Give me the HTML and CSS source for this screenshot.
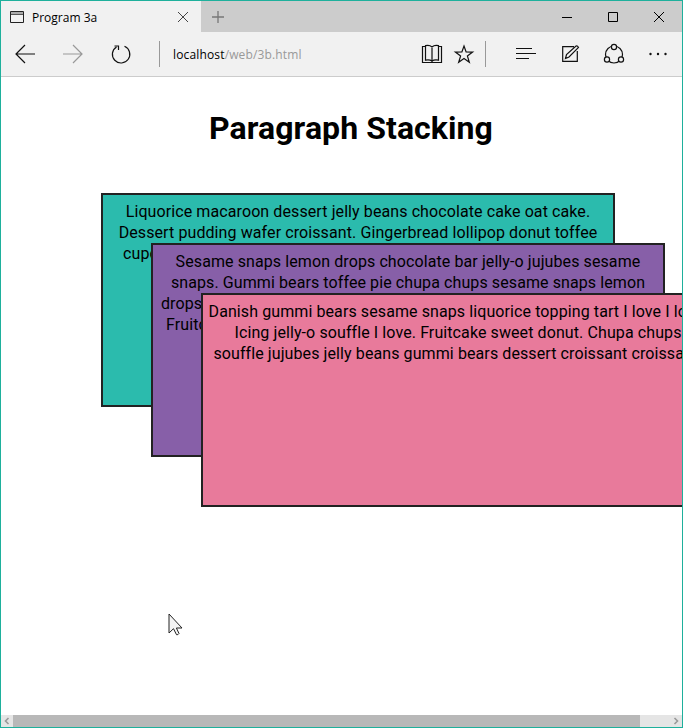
FILE: index.html
```html
<!DOCTYPE html>
<html lang="en">
<head>
<meta charset="utf-8">
<title>Program 3a</title>
<link rel="stylesheet" href="styles.css">
</head>
<body>
<div class="window">
  <header class="titlebar">
    <div class="tab">
      <svg class="tab-icon" width="14" height="12" viewBox="0 0 14 12"><path d="M.5 .5h13v11H.5z" fill="none" stroke="#222"/><path d="M1 2h12" stroke="#aaa" stroke-width="2"/><path d="M1 3.500h12" stroke="#555"/></svg>
      <span class="tab-title">Program 3a</span>
      <svg class="tab-close" width="12" height="12" viewBox="0 0 12 12"><path d="M1 1l10 10M11 1L1 11" stroke="#444"/></svg>
    </div>
    <svg class="new-tab" width="12" height="12" viewBox="0 0 12 12"><path d="M6 0v12M0 6h12" stroke="#777" stroke-width="1.3"/></svg>
    <svg class="controls" width="104" height="12" viewBox="0 0 104 12" fill="none" stroke="#000"><path d="M1 6.5h10M47.500 1.500h9v9h-9zM93 1l10 10M103 1L93 11"/></svg>
  </header>
  <nav class="toolbar">
    <svg width="682" height="44" viewBox="1 32 682 44" fill="none" stroke="#111" stroke-width="1.2">
      <path d="M35 54H16M25 45l-9 9 9 9"/>
      <path d="M63 54h19M73 45l9 9-9 9" stroke="#999"/>
      <path d="M124.500 46.300A8.700 8.700 0 1 1 116.500 46.900M114.500 46h4v4"/>
      <path d="M159.500 41v26M485.500 41v26" stroke="#999" stroke-width="1"/>
      <path d="M425 46.500h-2.500v16h19v-16H439M432 48v14.500M425.500 45.700q4-1 6.500 1.300 2.500-2.300 6.500-1.300v14.500q-4-.8-6.500 .8-2.500-1.600-6.500-.8z"/>
      <path d="M464 46l2.100 6 6.500.1-5.200 3.900 1.900 6.300-5.300-3.800-5.300 3.800 1.900-6.300-5.200-3.900 6.500-.1z"/>
      <path d="M516 48.500h16M516 53.500h20M516 58.500h13" stroke-width="1"/>
      <path d="M574 46.700h-11.300v14.600h14.600V51M565.500 58.500l1-4 9.500-8.500q1.500-.5 2.500 1.500l-9.500 9.500z"/>
      <circle cx="614" cy="54.500" r="8.500"/>
      <g fill="#f1f1f1"><circle cx="614" cy="47" r="2.600"/><circle cx="607" cy="59.500" r="2.600"/><circle cx="621" cy="59.500" r="2.600"/></g>
      <g fill="#111" stroke="none"><circle cx="650.500" cy="54" r="1.200"/><circle cx="658" cy="54" r="1.200"/><circle cx="665.500" cy="54" r="1.200"/></g>
    </svg>
    <div class="address">localhost<span>/web/3b.html</span></div>
  </nav>
  <main class="page">
    <h1>Paragraph Stacking</h1>
    <div class="box teal">
      <p>Liquorice macaroon dessert jelly beans chocolate cake oat cake.</p>
      <p>Dessert pudding wafer croissant. Gingerbread lollipop donut toffee</p>
      <p class="lead-a">cupcake</p>
    </div>
    <div class="box purple">
      <p>Sesame snaps lemon drops chocolate bar jelly-o jujubes sesame</p>
      <p>snaps. Gummi bears toffee pie chupa chups sesame snaps lemon</p>
      <p class="lead-b">drops.</p>
      <p class="lead-c">Fruitcake</p>
    </div>
    <div class="box pink">
      <p>Danish gummi bears sesame snaps liquorice topping tart I love I love.</p>
      <p>Icing jelly-o souffle I love. Fruitcake sweet donut. Chupa chups</p>
      <p>souffle jujubes jelly beans gummi bears dessert croissant croissant.</p>
    </div>
    <svg class="cursor" width="16" height="24" viewBox="0 0 16 24"><path d="M1 1v19l4.500-4.300 3 6q1.500.5 2.500-1.200l-2.600-5.500H14z" fill="#f4f4f4" stroke="#222"/></svg>
  </main>
  <footer class="scrollbar">
    <svg width="12" height="12" viewBox="0 0 12 12"><path d="M7.500 3L4.500 6l3 3" fill="none" stroke="#999" stroke-width="1.600"/></svg>
    <div class="thumb"></div>
    <svg class="right" width="12" height="12" viewBox="0 0 12 12"><path d="M4.500 3l3 3-3 3" fill="none" stroke="#999" stroke-width="1.600"/></svg>
  </footer>
</div>
</body>
</html>
```
FILE: styles.css
```css
* { box-sizing: border-box; }
body { margin: 0; background: #fff; overflow: hidden; }
svg { display: block; flex: none; }
.window {
  width: 683px;
  height: 728px;
  border: 1px solid #1eb09c;
  display: flex;
  flex-direction: column;
  overflow: hidden;
}
.titlebar {
  height: 31px;
  flex: none;
  background: #ccc;
  display: flex;
  align-items: center;
  font: 13px "Open Sans", sans-serif;
}
.tab {
  width: 200px;
  height: 31px;
  background: #f1f1f1;
  display: flex;
  align-items: center;
  padding: 0 12px 0 9px;
}
.tab-icon { margin-right: 8px; }
.tab-title { font-size: 12px; padding-top: 2px; }
.tab-close { margin-left: auto; }
.new-tab { margin-left: 11px; }
.controls { margin: 0 17px 0 auto; }
.toolbar {
  height: 45px;
  flex: none;
  position: relative;
  background: #f1f1f1;
  border-bottom: 1px solid #ccc;
}
.address {
  position: absolute;
  left: 172px;
  top: 14px;
  font: 12px/18px "Open Sans", sans-serif;
  letter-spacing: 0.15px;
  color: #000;
}
.address span { color: #999; }
.page {
  position: relative;
  flex: 1;
  overflow: hidden;
  background: #fff;
  font: 16px/21px Roboto, sans-serif;
  color: #000;
}
h1 {
  margin: 30px 0 0;
  width: 700px;
  text-align: center;
  font-size: 32px;
  line-height: 42px;
  font-weight: 700;
  letter-spacing: 0.08px;
}
.box {
  position: absolute;
  width: 514px;
  height: 214px;
  padding: 6px 5px 4px;
  border: 2px solid #222;
  text-align: center;
  white-space: nowrap;
  letter-spacing: 0.095px;
}
.box p { margin: 0; }
.teal { left: 100px; top: 116px; background: #2bbbad; }
.purple { left: 150px; top: 166px; background: #875fa8; }
.pink { left: 200px; top: 216px; background: #e87a9b; }
.box .lead-a { text-align: left; padding-left: 15px; }
.box .lead-b { text-align: left; padding-left: 3px; }
.box .lead-c { text-align: left; padding-left: 8px; }
.cursor { position: absolute; left: 167px; top: 536px; }
.scrollbar {
  height: 12px;
  flex: none;
  background: #e5e5e5;
  display: flex;
}
.thumb { width: 627px; background: #b8b8b8; }
.right { margin-left: auto; }
```
